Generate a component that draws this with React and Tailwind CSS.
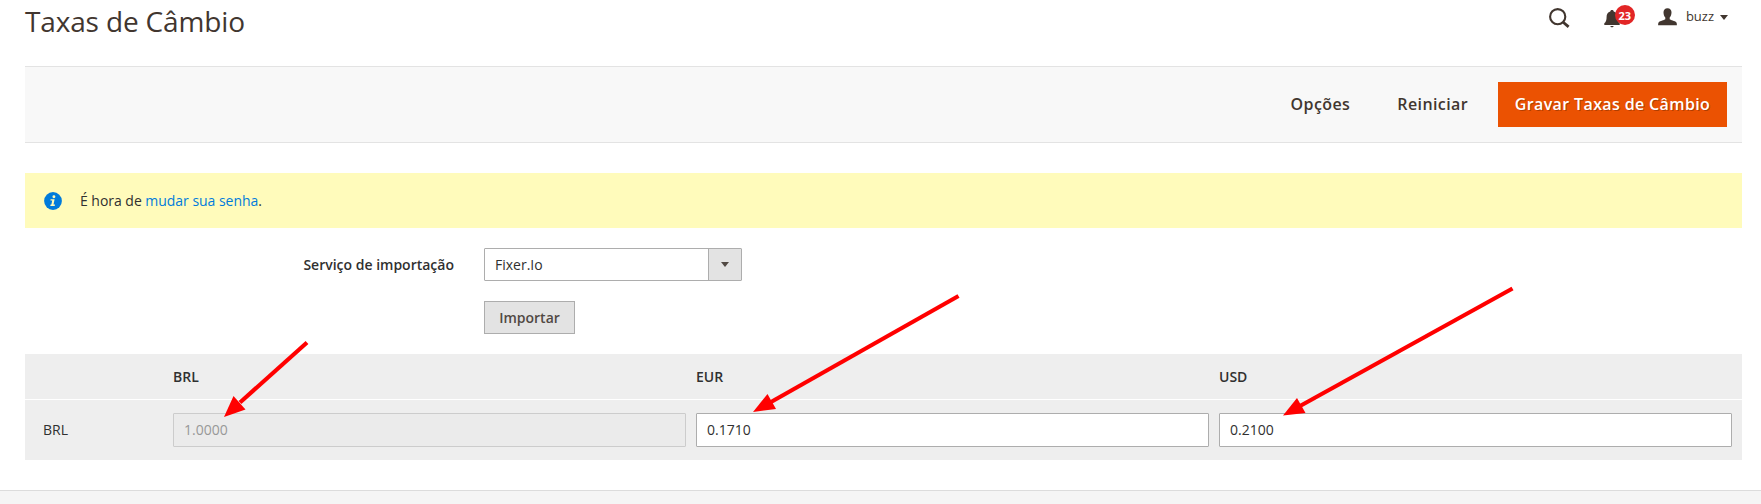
const SearchIcon = () => (
  <svg width="21" height="21" viewBox="0 0 21 21" className="shrink-0">
    <circle cx="8.7" cy="8.7" r="7.600" fill="none" stroke="#41362f" strokeWidth="2.100" />
    <path d="M14.2 14.2L19.600 18.900" stroke="#41362f" strokeWidth="2.800" strokeLinecap="butt" />
  </svg>
);

const BellIcon = () => (
  <svg width="16" height="18" viewBox="0 0 16 18" className="shrink-0">
    <path
      fill="#41362f"
      d="M8 .1C7 .1 6.300.7 6.300 1.500C3.700 2.200 2.600 4.300 2.600 6.700C2.600 10 2 12 .3 13.300V14.900H15.700V13.300C14 12 13.400 10 13.400 6.700C13.400 4.300 12.300 2.200 9.700 1.500C9.700.7 9 .1 8 .1ZM6.300 15.900C6.500 16.700 7.200 17.200 8 17.200C8.800 17.200 9.500 16.700 9.700 15.900Z"
    />
  </svg>
);

const UserIcon = () => (
  <svg width="19" height="18" viewBox="0 0 19 18" className="shrink-0">
    <path
      fill="#41362f"
      d="M9.500.2C6.900.2 5.500 1.900 5.500 4.300C5.500 6.500 6.100 8.300 7.300 9.400V11.200C6.800 12 1.800 12.800.7 14.200C.2 15 .1 16 .1 17.300H18.900C18.900 16 18.800 15 18.300 14.200C17.200 12.800 12.200 12 11.700 11.200V9.400C12.900 8.300 13.500 6.500 13.500 4.300C13.500 1.900 12.100.2 9.500.2Z"
    />
  </svg>
);

const InfoIcon = () => (
  <svg width="18" height="18" viewBox="0 0 18 18" className="shrink-0">
    <circle cx="9" cy="9" r="8.900" fill="#007bdb" />
    <g fill="#fffbbb">
      <circle cx="9.900" cy="4.700" r="1.450" />
      <path d="M6.600 7.200H10.600L9.500 12.600H11L10.700 13.900H6.300L6.600 12.600H7.400L8.200 8.500H6.500Z" />
    </g>
  </svg>
);

const Caret = ({ className, fill }) => (
  <svg width="8" height="5" viewBox="0 0 8 5" className={className}>
    <path d="M0 0H8L4 5Z" fill={fill} />
  </svg>
);

const arrows = [
  { from: [307, 342.500], to: [240, 402.500], head: "224,417 233.500,396 245.500,409.500" },
  { from: [958.500, 296], to: [771, 402], head: "753,412 767.500,394 776,409" },
  { from: [1512.500, 288.500], to: [1300, 406], head: "1283,415.500 1297,398 1305.500,413" },
];

const Arrows = () => (
  <svg className="pointer-events-none absolute left-0 top-0" width="1761" height="504">
    {arrows.map((a) => (
      <g key={a.head} fill="#f00" stroke="#f00">
        <line x1={a.from[0]} y1={a.from[1]} x2={a.to[0]} y2={a.to[1]} strokeWidth="4.2" />
        <polygon points={a.head} stroke="none" />
      </g>
    ))}
  </svg>
);

const currencies = ["BRL", "EUR", "USD"];
const rates = ["1.0000", "0.1710", "0.2100"];

export default function App() {
  return (
    <div className="relative flex h-[504px] w-[1761px] flex-col overflow-hidden bg-white font-['Open_Sans','Noto_Sans',sans-serif] text-[14px] leading-[19px] text-[#303030]">
      <header className="flex h-[66px] shrink-0 items-start justify-between pl-[25px] pr-[33px]">
        <h1 className="mt-[2px] text-[28px] leading-[38px] tracking-[-0.15px] text-[#41362f]">Taxas de Câmbio</h1>
        <div className="flex items-start">
          <div className="mt-[8px]">
            <SearchIcon />
          </div>
          <div className="relative ml-[34px] mt-[10px]">
            <BellIcon />
            <span className="absolute -top-[5px] left-[11px] flex h-5 w-5 items-center justify-center rounded-full bg-[#e22626] text-[11px] font-bold leading-none text-white">
              23
            </span>
          </div>
          <div className="ml-[38px] mt-[8px]">
            <UserIcon />
          </div>
          <span className="ml-[9px] mt-[7px] text-[13px] leading-[18px] text-[#41362f]">buzz</span>
          <Caret className="ml-[6px] mt-[15px]" fill="#41362f" />
        </div>
      </header>

      <main className="flex flex-col px-[25px] pr-[19px]">
        <div className="flex h-[77px] items-center justify-end border-y border-[#e3e3e3] bg-[#f8f8f8] pr-[15px] text-[16px] font-semibold text-[#41362f]">
          <button className="mr-[47px] tracking-[0.4px]">Opções</button>
          <button className="mr-[30px] tracking-[0.4px]">Reiniciar</button>
          <button className="h-[45px] w-[229px] bg-[#eb5202] tracking-[0.37px] text-white [text-shadow:1px_1px_0_rgba(0,0,0,0.25)]">
            Gravar Taxas de Câmbio
          </button>
        </div>

        <div className="mt-[30px] flex h-[55px] items-center bg-[#fffbbb] pl-[19px]">
          <InfoIcon />
          <p className="ml-[18px] tracking-[-0.03px]">
            É hora de <a className="text-[#007bdb]">mudar sua senha</a>.
          </p>
        </div>

        <div className="mt-[20px] flex h-[33px] items-center">
          <label className="w-[429px] text-right font-semibold">Serviço de importação</label>
          <div className="ml-[30px] flex h-[33px] w-[258px] rounded-[1px] border border-[#adadad] bg-white">
            <span className="flex flex-1 items-center pl-[10px]">Fixer.Io</span>
            <span className="flex w-[33px] items-center justify-center border-l border-[#adadad] bg-[#e3e3e3]">
              <Caret fill="#514943" />
            </span>
          </div>
        </div>
        <button className="ml-[459px] mt-[20px] h-[33px] w-[91px] border border-[#adadad] bg-[#e3e3e3] font-semibold text-[#514943]">
          Importar
        </button>

        <div className="mt-[20px] flex flex-col gap-px">
          <div className="grid h-[45px] grid-cols-[148px_523px_523px_523px] items-center bg-[#eee] font-semibold">
            <span />
            {currencies.map((c) => (
              <span key={c}>{c}</span>
            ))}
          </div>
          <div className="grid h-[60px] grid-cols-[148px_523px_523px_523px] items-center bg-[#eee]">
            <span className="pb-[2px] pl-[18px]">BRL</span>
            {rates.map((r, i) => (
              <div
                key={r}
                className={
                  i === 0
                    ? "flex h-[34px] w-[513px] items-center rounded-[1px] border border-[#cccccc] bg-[#ebebeb] pb-[2px] pl-[10px] text-[#989898]"
                    : "flex h-[34px] w-[513px] items-center rounded-[1px] border border-[#adadad] bg-white pb-[2px] pl-[10px]"
                }
              >
                {r}
              </div>
            ))}
          </div>
        </div>
      </main>

      <footer className="mt-[30px] flex-1 border-t border-[#dcdcdc] bg-[#f5f5f5]" />
      <Arrows />
    </div>
  );
}
